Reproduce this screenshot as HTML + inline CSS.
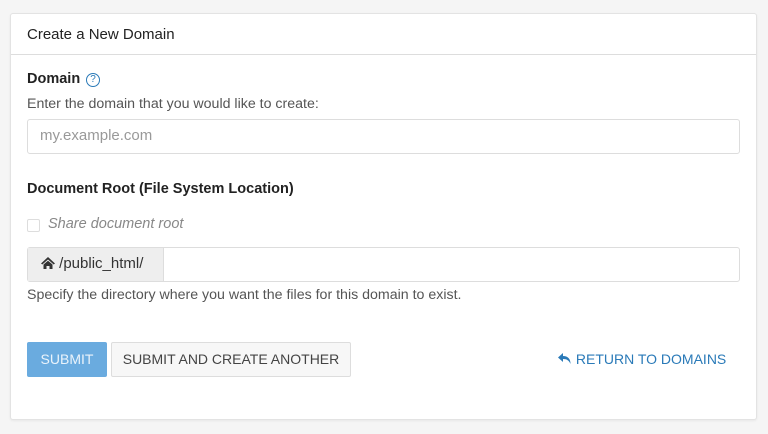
<!DOCTYPE html>
<html><head><style>
body{margin:0;width:768px;height:434px;background:#f5f5f5;font-family:"Liberation Sans",sans-serif;color:#333;position:relative;overflow:hidden}
.p{position:absolute;left:10px;top:13px;width:745px;height:405px;background:#fff;border:1px solid #e3e3e3;border-radius:3px;box-shadow:0 1px 2px rgba(0,0,0,.06)}
.a{position:absolute;white-space:nowrap}
.hdr{left:0;top:0;width:745px;height:40px;border-bottom:1px solid #ddd}
</style></head><body>
<div class="p">
<div class="a hdr"></div>
<div class="a" style="left:16px;top:12px;font-size:15px;color:#222">Create a New Domain</div>
<div class="a" style="left:16px;top:57px;font-size:14.5px;font-weight:bold;color:#222">Domain</div>
<div class="a" style="left:75px;top:59px;width:12px;height:12px;border:1px solid #2a7ab8;border-radius:50%;color:#2a7ab8;font-size:10px;line-height:12px;text-align:center">?</div>
<div class="a" style="left:16px;top:82px;font-size:14.2px;color:#555">Enter the domain that you would like to create:</div>
<div class="a" style="left:16px;top:105px;width:711px;height:33px;border:1px solid #ddd;border-radius:3px"></div>
<div class="a" style="left:29px;top:113px;font-size:15px;color:#999">my.example.com</div>
<div class="a" style="left:16px;top:167px;font-size:14.5px;font-weight:bold;color:#222">Document Root (File System Location)</div>
<div class="a" style="left:16px;top:205px;width:11px;height:11px;border:1px solid #ddd;border-radius:2px"></div>
<div class="a" style="left:37px;top:202px;font-size:14.5px;font-style:italic;color:#888">Share document root</div>
<div class="a" style="left:16px;top:233px;width:711px;height:33px;border:1px solid #ddd;border-radius:3px"></div>
<div class="a" style="left:17px;top:234px;width:135px;height:33px;background:#eee;border-right:1px solid #ddd"></div>
<div class="a" style="left:30px;top:241px;font-size:15px;color:#333"><svg width="14" height="12" viewBox="0 0 14 12" style="vertical-align:-1px"><path d="M7 0 L0 6.5 L1.3 7.5 L7 2.5 L12.7 7.5 L14 6.5 Z M2.5 7.5 L7 3.8 L11.5 7.5 V12 H8.5 V9 H5.5 V12 H2.5 Z" fill="#333"/></svg> /public_html/</div>
<div class="a" style="left:16px;top:273px;font-size:14.2px;color:#555">Specify the directory where you want the files for this domain to exist.</div>
<div class="a" style="left:16px;top:328px;width:80px;height:35px;background:#6aabdf;border-radius:2px;color:#eaf3fb;font-size:14px;line-height:35px;text-align:center">SUBMIT</div>
<div class="a" style="left:100px;top:328px;width:238px;height:33px;background:#f7f7f7;border:1px solid #ddd;border-radius:2px;color:#444;font-size:14px;line-height:33px;text-align:center">SUBMIT AND CREATE ANOTHER</div>
<div class="a" style="left:547px;top:337px;font-size:14px;color:#2a7ab8"><svg width="14" height="12" viewBox="0 0 14 12" style="vertical-align:-1px"><path d="M5 0 L0 4.5 L5 9 V6 C9 6 11 7.5 12.5 11 C12.5 6 10 3 5 3 Z" fill="#2a7ab8"/></svg> RETURN TO DOMAINS</div>
</div>
</body></html>
